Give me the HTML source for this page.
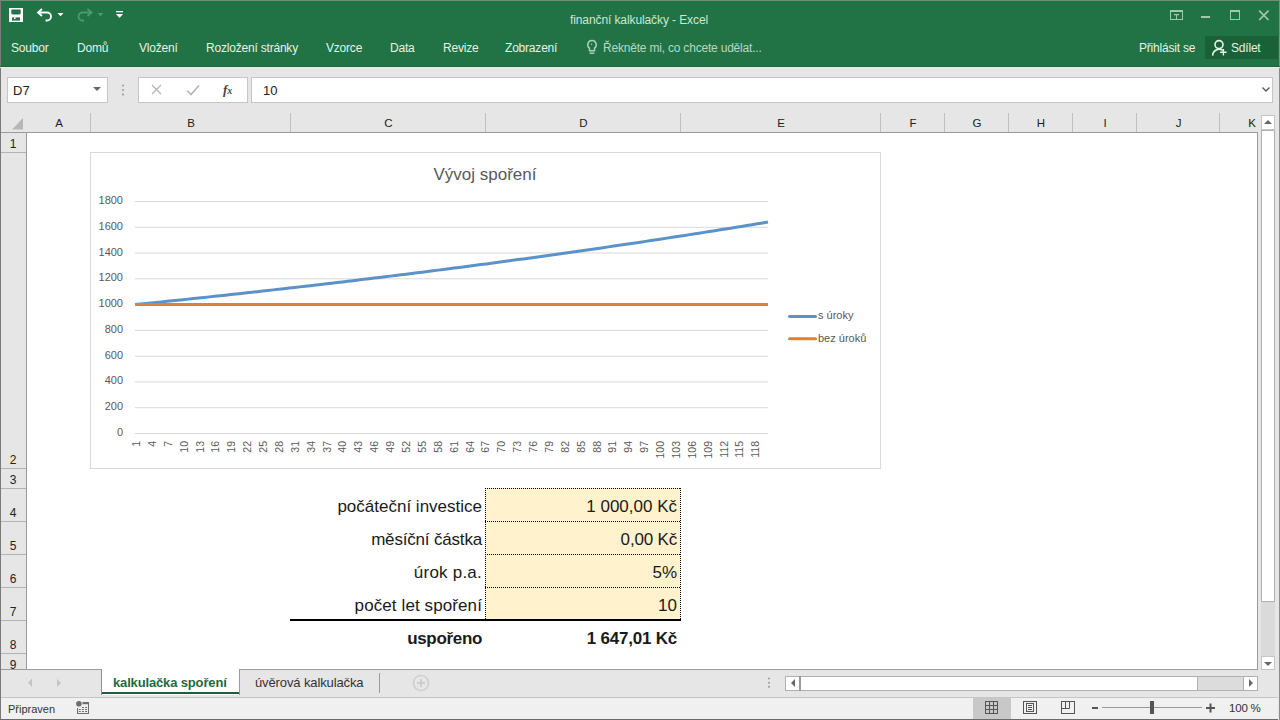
<!DOCTYPE html>
<html><head><meta charset="utf-8">
<style>
*{margin:0;padding:0;box-sizing:border-box}
html,body{width:1280px;height:720px;overflow:hidden;background:#fff;font-family:"Liberation Sans",sans-serif}
.a{position:absolute}
.t{position:absolute;white-space:nowrap;line-height:1}
#title{left:0;top:0;width:1280px;height:67px;background:#217346}
.rt{color:#e4f2e8;font-size:12px;letter-spacing:-0.2px}
.col{position:absolute;top:112px;height:20px;border-right:1px solid #c8c8c8}
.ch{position:absolute;top:117.5px;font-size:11.5px;color:#222;text-align:center;line-height:1;padding-left:2px}
.rh{position:absolute;left:1px;width:25px;border-bottom:1px solid #c8c8c8;background:#e6e6e6}
.rn{position:absolute;left:0;width:26px;text-align:center;font-size:12px;color:#222;line-height:1}
.cell{position:absolute;font-size:17px;color:#1a1a1a;text-align:right;line-height:1}
</style></head><body>
<!-- title bar + ribbon -->
<div id="title" class="a"></div>
<div class="a" style="left:0;top:0;width:1280px;height:1px;background:#6f8f7a"></div>
<div class="a" style="left:0;top:0;width:1px;height:720px;background:#7a7a7a"></div>
<div class="a" style="left:1279px;top:0;width:1px;height:68px;background:#6f9a7e"></div>
<div class="a" style="left:0;top:66px;width:1280px;height:1px;background:#2a6040"></div><div class="a" style="left:0;top:67px;width:1280px;height:1px;background:#dcf2e3"></div>

<!-- QAT icons -->
<svg class="a" style="left:0;top:0" width="140" height="33" viewBox="0 0 140 33">
 <rect x="9" y="8" width="14" height="14" fill="#fff"/>
 <path d="M11.3 9.6h9.4v3.4a1.6 1.6 0 0 1-1.6 1.6h-6.2a1.6 1.6 0 0 1-1.6-1.6z" fill="#217346"/>
 <rect x="12" y="17.4" width="8" height="3.2" fill="#217346"/>
 <rect x="14" y="17.4" width="1.6" height="1.6" fill="#fff"/>
 <path d="M38.5 12.5h8.5a4 4 0 0 1 0 8h-1.5" fill="none" stroke="#fff" stroke-width="1.8"/>
 <path d="M42 9l-4 3.5 4 3.5" fill="none" stroke="#fff" stroke-width="1.8"/>
 <path d="M57.5 13h6l-3 3.2z" fill="#fff"/>
 <path d="M91 12.5h-8.5a4 4 0 0 0 0 8h1.5" fill="none" stroke="#4f9a6c" stroke-width="1.8"/>
 <path d="M87.5 9l4 3.5-4 3.5" fill="none" stroke="#4f9a6c" stroke-width="1.8"/>
 <path d="M97.5 13h6l-3 3.2z" fill="#4f9a6c"/>
 <rect x="116" y="11" width="7" height="1.3" fill="#fff"/>
 <path d="M116 14h7l-3.5 4z" fill="#fff"/>
</svg>
<div class="t" style="left:570px;top:13.7px;font-size:12px;letter-spacing:-0.1px;color:#cce6d5">finanční kalkulačky - Excel</div>

<!-- window controls -->
<svg class="a" style="left:1160px;top:0" width="120" height="33" viewBox="1160 0 120 33">
 <g fill="none" stroke="#9fc8ad" stroke-width="1">
  <rect x="1170.5" y="10.5" width="12" height="9"/>
  <path d="M1170.5 11.5h12"/>
  <path d="M1176.5 19v-5M1174 14.5h5M1175 15.5l1.5-1.5 1.5 1.5"/>
  <rect x="1230.5" y="10.5" width="9" height="9"/>
  <path d="M1230.5 11.5h9"/>
  <path d="M1259.2 10.7l9.3 9.3M1268.5 10.7l-9.3 9.3" stroke-width="1.7"/>
 </g>
 <rect x="1201" y="16" width="9" height="2" fill="#9fc8ad"/>
</svg>

<!-- ribbon tabs -->
<div class="t rt" style="left:11px;top:42.3px">Soubor</div>
<div class="t rt" style="left:77px;top:42.3px">Domů</div>
<div class="t rt" style="left:139px;top:42.3px">Vložení</div>
<div class="t rt" style="left:206px;top:42.3px">Rozložení stránky</div>
<div class="t rt" style="left:326px;top:42.3px">Vzorce</div>
<div class="t rt" style="left:390px;top:42.3px">Data</div>
<div class="t rt" style="left:443px;top:42.3px">Revize</div>
<div class="t rt" style="left:505px;top:42.3px">Zobrazení</div>
<svg class="a" style="left:584px;top:38px" width="16" height="18" viewBox="0 0 16 18">
 <path d="M8 2.6a4.2 4.2 0 0 0-2.5 7.6v2.6h5v-2.6A4.2 4.2 0 0 0 8 2.6z" fill="none" stroke="#a9d1b7" stroke-width="1.5"/>
 <path d="M5.7 15.2h4.6" stroke="#a9d1b7" stroke-width="1.5"/>
 <circle cx="7.6" cy="6.3" r="0.7" fill="#a9d1b7"/>
</svg>
<div class="t rt" style="left:603px;top:42.3px;color:#b5d8c1">Řekněte mi, co chcete udělat...</div>
<div class="t rt" style="left:1139px;top:42.3px">Přihlásit se</div>
<div class="a" style="left:1205px;top:36px;width:73px;height:23px;background:#1b6137"></div>
<svg class="a" style="left:1210px;top:38px" width="20" height="20" viewBox="0 0 20 20">
 <circle cx="9" cy="6.6" r="4" fill="none" stroke="#e4f6ea" stroke-width="1.6"/>
 <path d="M2.6 17.6a6.6 6.6 0 0 1 10.2-5.2" fill="none" stroke="#e4f6ea" stroke-width="1.6"/>
 <path d="M13.4 11v6.5M10.1 14.3h6.5" stroke="#e4f6ea" stroke-width="1.4"/>
</svg>
<div class="t rt" style="left:1231px;top:42.3px">Sdílet</div>

<!-- formula area -->
<div class="a" style="left:1px;top:68px;width:1277px;height:601px;background:#e6e6e6"></div>
<div class="a" style="left:7px;top:77px;width:101px;height:26px;background:#fff;border:1px solid #c6c6c6"></div>
<div class="t" style="left:13px;top:84px;font-size:13px;color:#222">D7</div>
<svg class="a" style="left:92px;top:86px" width="10" height="6"><path d="M1 1h8l-4 4z" fill="#666"/></svg>
<svg class="a" style="left:121px;top:83px" width="4" height="14"><circle cx="2" cy="2.5" r="1" fill="#9a9a9a"/><circle cx="2" cy="7" r="1" fill="#9a9a9a"/><circle cx="2" cy="11.5" r="1" fill="#9a9a9a"/></svg>
<div class="a" style="left:138px;top:77px;width:110px;height:26px;background:#fff;border:1px solid #c6c6c6"></div>
<svg class="a" style="left:138px;top:77px" width="110" height="26" viewBox="138 77 110 26">
 <path d="M152 85l9 9M161 85l-9 9" stroke="#b4b4b4" stroke-width="1.3"/>
 <path d="M187 90.5l4 4 8-9" fill="none" stroke="#b4b4b4" stroke-width="1.6"/>
</svg>
<div class="t" style="left:223px;top:83px;font-size:13px;font-family:'Liberation Serif';font-style:italic;font-weight:bold;color:#444">f<span style="font-size:10px">x</span></div>
<div class="a" style="left:251px;top:77px;width:1022px;height:26px;background:#fff;border:1px solid #c6c6c6"></div>
<div class="t" style="left:263px;top:84px;font-size:13px;color:#222">10</div>
<svg class="a" style="left:1261px;top:86px" width="10" height="7"><path d="M1.5 1.5l3.5 3.5 3.5-3.5" fill="none" stroke="#555" stroke-width="1.3"/></svg>

<!-- column headers -->
<div class="a" style="left:1px;top:132px;width:1257px;height:1px;background:#9b9b9b"></div>
<svg class="a" style="left:8px;top:117px" width="16" height="14"><path d="M15 1v11.5H4z" fill="#b7b7b7"/></svg>
<div class="a" style="left:90px;top:113px;width:1px;height:19px;background:#c0c0c0"></div>
<div class="ch" style="left:26px;width:64px">A</div>
<div class="a" style="left:290px;top:113px;width:1px;height:19px;background:#c0c0c0"></div>
<div class="ch" style="left:90px;width:200px">B</div>
<div class="a" style="left:485px;top:113px;width:1px;height:19px;background:#c0c0c0"></div>
<div class="ch" style="left:290px;width:195px">C</div>
<div class="a" style="left:680px;top:113px;width:1px;height:19px;background:#c0c0c0"></div>
<div class="ch" style="left:485px;width:195px">D</div>
<div class="a" style="left:880px;top:113px;width:1px;height:19px;background:#c0c0c0"></div>
<div class="ch" style="left:680px;width:200px">E</div>
<div class="a" style="left:944px;top:113px;width:1px;height:19px;background:#c0c0c0"></div>
<div class="ch" style="left:880px;width:64px">F</div>
<div class="a" style="left:1008px;top:113px;width:1px;height:19px;background:#c0c0c0"></div>
<div class="ch" style="left:944px;width:64px">G</div>
<div class="a" style="left:1072px;top:113px;width:1px;height:19px;background:#c0c0c0"></div>
<div class="ch" style="left:1008px;width:64px">H</div>
<div class="a" style="left:1136px;top:113px;width:1px;height:19px;background:#c0c0c0"></div>
<div class="ch" style="left:1072px;width:64px">I</div>
<div class="a" style="left:1219px;top:113px;width:1px;height:19px;background:#c0c0c0"></div>
<div class="ch" style="left:1136px;width:83px">J</div>
<div class="a" style="left:1258px;top:113px;width:1px;height:19px;background:#c0c0c0"></div>
<div class="ch" style="left:1219px;width:39px;text-align:right;padding-right:2px">K</div>
<!-- grid white -->
<div class="a" style="left:27px;top:133px;width:1231px;height:536px;background:#fff"></div>
<div class="a" style="left:26px;top:132px;width:1px;height:537px;background:#9b9b9b"></div>
<div class="a" style="left:1px;top:152px;width:25px;height:1px;background:#b4b4b4"></div>
<div class="rn" style="top:137.5px">1</div>
<div class="a" style="left:1px;top:468px;width:25px;height:1px;background:#b4b4b4"></div>
<div class="rn" style="top:453.5px">2</div>
<div class="a" style="left:1px;top:488px;width:25px;height:1px;background:#b4b4b4"></div>
<div class="rn" style="top:473.5px">3</div>
<div class="a" style="left:1px;top:521px;width:25px;height:1px;background:#b4b4b4"></div>
<div class="rn" style="top:506.5px">4</div>
<div class="a" style="left:1px;top:554px;width:25px;height:1px;background:#b4b4b4"></div>
<div class="rn" style="top:539.5px">5</div>
<div class="a" style="left:1px;top:587px;width:25px;height:1px;background:#b4b4b4"></div>
<div class="rn" style="top:572.5px">6</div>
<div class="a" style="left:1px;top:620px;width:25px;height:1px;background:#b4b4b4"></div>
<div class="rn" style="top:605.5px">7</div>
<div class="a" style="left:1px;top:653px;width:25px;height:1px;background:#b4b4b4"></div>
<div class="rn" style="top:638.5px">8</div>
<div class="a" style="left:1px;top:673px;width:25px;height:1px;background:#b4b4b4"></div>
<div class="rn" style="top:658.5px">9</div>

<!-- chart -->
<div class="a" style="left:90px;top:152px;width:791px;height:317px;border:1px solid #d9d9d9;background:#fff"></div>
<svg class="a" style="left:0;top:0" width="1280" height="720" viewBox="0 0 1280 720">
<g fill="#595959" font-family="Liberation Sans" font-size="11">
<line stroke="#d9d9d9" x1="135" x2="768" y1="433.5" y2="433.5"/>
<text x="123" y="437.5" dy="-1.5" text-anchor="end">0</text>
<line stroke="#d9d9d9" x1="135" x2="768" y1="407.7" y2="407.7"/>
<text x="123" y="411.7" dy="-1.5" text-anchor="end">200</text>
<line stroke="#d9d9d9" x1="135" x2="768" y1="381.9" y2="381.9"/>
<text x="123" y="385.9" dy="-1.5" text-anchor="end">400</text>
<line stroke="#d9d9d9" x1="135" x2="768" y1="356.2" y2="356.2"/>
<text x="123" y="360.2" dy="-1.5" text-anchor="end">600</text>
<line stroke="#d9d9d9" x1="135" x2="768" y1="330.4" y2="330.4"/>
<text x="123" y="334.4" dy="-1.5" text-anchor="end">800</text>
<line stroke="#d9d9d9" x1="135" x2="768" y1="304.6" y2="304.6"/>
<text x="123" y="308.6" dy="-1.5" text-anchor="end">1000</text>
<line stroke="#d9d9d9" x1="135" x2="768" y1="278.8" y2="278.8"/>
<text x="123" y="282.8" dy="-1.5" text-anchor="end">1200</text>
<line stroke="#d9d9d9" x1="135" x2="768" y1="253.0" y2="253.0"/>
<text x="123" y="257.0" dy="-1.5" text-anchor="end">1400</text>
<line stroke="#d9d9d9" x1="135" x2="768" y1="227.3" y2="227.3"/>
<text x="123" y="231.3" dy="-1.5" text-anchor="end">1600</text>
<line stroke="#d9d9d9" x1="135" x2="768" y1="201.5" y2="201.5"/>
<text x="123" y="205.5" dy="-1.5" text-anchor="end">1800</text>
</g>
<text x="485" y="180" text-anchor="middle" font-family="Liberation Sans" font-size="17" fill="#595959">Vývoj spoření</text>
<g fill="#595959" font-family="Liberation Sans" font-size="10.5">
<text transform="translate(140.0,441) rotate(-90)" text-anchor="end">1</text>
<text transform="translate(155.9,441) rotate(-90)" text-anchor="end">4</text>
<text transform="translate(171.8,441) rotate(-90)" text-anchor="end">7</text>
<text transform="translate(187.6,441) rotate(-90)" text-anchor="end">10</text>
<text transform="translate(203.5,441) rotate(-90)" text-anchor="end">13</text>
<text transform="translate(219.4,441) rotate(-90)" text-anchor="end">16</text>
<text transform="translate(235.3,441) rotate(-90)" text-anchor="end">19</text>
<text transform="translate(251.2,441) rotate(-90)" text-anchor="end">22</text>
<text transform="translate(267.0,441) rotate(-90)" text-anchor="end">25</text>
<text transform="translate(282.9,441) rotate(-90)" text-anchor="end">28</text>
<text transform="translate(298.8,441) rotate(-90)" text-anchor="end">31</text>
<text transform="translate(314.7,441) rotate(-90)" text-anchor="end">34</text>
<text transform="translate(330.5,441) rotate(-90)" text-anchor="end">37</text>
<text transform="translate(346.4,441) rotate(-90)" text-anchor="end">40</text>
<text transform="translate(362.3,441) rotate(-90)" text-anchor="end">43</text>
<text transform="translate(378.2,441) rotate(-90)" text-anchor="end">46</text>
<text transform="translate(394.1,441) rotate(-90)" text-anchor="end">49</text>
<text transform="translate(409.9,441) rotate(-90)" text-anchor="end">52</text>
<text transform="translate(425.8,441) rotate(-90)" text-anchor="end">55</text>
<text transform="translate(441.7,441) rotate(-90)" text-anchor="end">58</text>
<text transform="translate(457.6,441) rotate(-90)" text-anchor="end">61</text>
<text transform="translate(473.5,441) rotate(-90)" text-anchor="end">64</text>
<text transform="translate(489.3,441) rotate(-90)" text-anchor="end">67</text>
<text transform="translate(505.2,441) rotate(-90)" text-anchor="end">70</text>
<text transform="translate(521.1,441) rotate(-90)" text-anchor="end">73</text>
<text transform="translate(537.0,441) rotate(-90)" text-anchor="end">76</text>
<text transform="translate(552.9,441) rotate(-90)" text-anchor="end">79</text>
<text transform="translate(568.7,441) rotate(-90)" text-anchor="end">82</text>
<text transform="translate(584.6,441) rotate(-90)" text-anchor="end">85</text>
<text transform="translate(600.5,441) rotate(-90)" text-anchor="end">88</text>
<text transform="translate(616.4,441) rotate(-90)" text-anchor="end">91</text>
<text transform="translate(632.2,441) rotate(-90)" text-anchor="end">94</text>
<text transform="translate(648.1,441) rotate(-90)" text-anchor="end">97</text>
<text transform="translate(664.0,441) rotate(-90)" text-anchor="end">100</text>
<text transform="translate(679.9,441) rotate(-90)" text-anchor="end">103</text>
<text transform="translate(695.8,441) rotate(-90)" text-anchor="end">106</text>
<text transform="translate(711.6,441) rotate(-90)" text-anchor="end">109</text>
<text transform="translate(727.5,441) rotate(-90)" text-anchor="end">112</text>
<text transform="translate(743.4,441) rotate(-90)" text-anchor="end">115</text>
<text transform="translate(759.3,441) rotate(-90)" text-anchor="end">118</text>
</g>
<polyline points="135.00,304.60 140.32,304.06 145.64,303.52 150.96,302.98 156.28,302.44 161.60,301.89 166.92,301.34 172.24,300.79 177.55,300.24 182.87,299.68 188.19,299.13 193.51,298.57 198.83,298.01 204.15,297.44 209.47,296.87 214.79,296.30 220.11,295.73 225.43,295.16 230.75,294.58 236.07,294.00 241.39,293.42 246.71,292.84 252.03,292.25 257.34,291.66 262.66,291.07 267.98,290.48 273.30,289.88 278.62,289.29 283.94,288.68 289.26,288.08 294.58,287.48 299.90,286.87 305.22,286.26 310.54,285.64 315.86,285.03 321.18,284.41 326.50,283.79 331.82,283.16 337.13,282.54 342.45,281.91 347.77,281.28 353.09,280.64 358.41,280.00 363.73,279.36 369.05,278.72 374.37,278.08 379.69,277.43 385.01,276.78 390.33,276.13 395.65,275.47 400.97,274.81 406.29,274.15 411.61,273.49 416.92,272.82 422.24,272.15 427.56,271.48 432.88,270.80 438.20,270.13 443.52,269.45 448.84,268.76 454.16,268.08 459.48,267.39 464.80,266.69 470.12,266.00 475.44,265.30 480.76,264.60 486.08,263.90 491.39,263.19 496.71,262.48 502.03,261.77 507.35,261.05 512.67,260.33 517.99,259.61 523.31,258.89 528.63,258.16 533.95,257.43 539.27,256.70 544.59,255.96 549.91,255.22 555.23,254.48 560.55,253.73 565.87,252.98 571.18,252.23 576.50,251.47 581.82,250.72 587.14,249.95 592.46,249.19 597.78,248.42 603.10,247.65 608.42,246.88 613.74,246.10 619.06,245.32 624.38,244.53 629.70,243.75 635.02,242.95 640.34,242.16 645.66,241.36 650.97,240.56 656.29,239.76 661.61,238.95 666.93,238.14 672.25,237.33 677.57,236.51 682.89,235.69 688.21,234.86 693.53,234.04 698.85,233.21 704.17,232.37 709.49,231.53 714.81,230.69 720.13,229.85 725.45,229.00 730.76,228.15 736.08,227.29 741.40,226.43 746.72,225.57 752.04,224.70 757.36,223.83 762.68,222.96 768.00,222.08" fill="none" stroke="#5b93c9" stroke-width="3" stroke-linejoin="round"/>
<polyline points="135,304.6 768,304.6" fill="none" stroke="#e27e3a" stroke-width="3"/>
<line x1="789.5" x2="815.5" y1="316.5" y2="316.5" stroke="#5b93c9" stroke-width="3" stroke-linecap="round"/>
<line x1="789.5" x2="815.5" y1="338.8" y2="338.8" stroke="#e27e3a" stroke-width="3" stroke-linecap="round"/>
<text x="818" y="319.3" font-family="Liberation Sans" font-size="11" fill="#595959">s úroky</text>
<text x="818" y="342" font-family="Liberation Sans" font-size="11" fill="#595959">bez úroků</text>
</svg>

<!-- table -->
<div class="a" style="left:485px;top:488px;width:196px;height:132px;background:#fff2cc"></div>
<svg class="a" style="left:0;top:0" width="1280" height="720" viewBox="0 0 1280 720">
 <g stroke="#000" stroke-width="1" stroke-dasharray="1 1" fill="none">
  <path d="M485.5 488v132M680.5 488v132M485 488.5h196M485 521.5h196M485 554.5h196M485 587.5h196"/>
 </g>
 <rect x="290" y="619" width="391" height="2" fill="#000"/>
</svg>
<div class="cell" style="right:798px;top:498px">počáteční investice</div>
<div class="cell" style="right:798px;top:531px;letter-spacing:-0.18px">měsíční částka</div>
<div class="cell" style="right:798px;top:564px;letter-spacing:0.22px">úrok p.a.</div>
<div class="cell" style="right:798px;top:597px;letter-spacing:0.1px">počet let spoření</div>
<div class="cell" style="right:798px;top:630px;font-weight:bold;letter-spacing:-0.33px">uspořeno</div>
<div class="cell" style="right:603px;top:498px">1 000,00 Kč</div>
<div class="cell" style="right:603px;top:531px;letter-spacing:-0.18px">0,00 Kč</div>
<div class="cell" style="right:603px;top:564px">5%</div>
<div class="cell" style="right:603px;top:597px">10</div>
<div class="cell" style="right:603px;top:630px;font-weight:bold;letter-spacing:-0.21px">1 647,01 Kč</div>

<!-- vertical scrollbar -->
<div class="a" style="left:1258px;top:112px;width:20px;height:558px;background:#e6e6e6"></div>
<div class="a" style="left:1257px;top:132px;width:1px;height:537px;background:#9b9b9b"></div>
<div class="a" style="left:1261px;top:115px;width:14px;height:15px;background:#fff;border:1px solid #c6c6c6"></div>
<svg class="a" style="left:1263px;top:119px" width="10" height="6"><path d="M1 5h8L5 1z" fill="#666"/></svg>
<div class="a" style="left:1261px;top:600px;width:14px;height:56px;background:#dadada"></div>
<div class="a" style="left:1261px;top:130px;width:14px;height:472px;background:#fff;border:1px solid #b0b0b0"></div>
<div class="a" style="left:1261px;top:656px;width:14px;height:14px;background:#fff;border:1px solid #c6c6c6"></div>
<svg class="a" style="left:1263px;top:661px" width="10" height="6"><path d="M1 1h8L5 5z" fill="#666"/></svg>

<!-- sheet tabs bar -->
<div class="a" style="left:1px;top:669px;width:1257px;height:1px;background:#9b9b9b"></div>
<div class="a" style="left:1px;top:670px;width:1277px;height:27px;background:#e6e6e6"></div>
<svg class="a" style="left:20px;top:676px" width="50" height="14"><path d="M12 2.5v8.5l-4-4.25z" fill="#c4c4c4"/><path d="M37 3v8l4-4z" fill="#c4c4c4"/></svg>
<div class="a" style="left:101px;top:669px;width:139px;height:26px;background:#fff;border-left:1px solid #8f8f8f;border-right:1px solid #9a9a9a"></div>
<div class="a" style="left:102px;top:692px;width:137px;height:2px;background:#1e5e3a"></div>
<div class="t" style="left:113px;top:676px;font-size:13px;font-weight:bold;letter-spacing:-0.15px;color:#1f6a40">kalkulačka spoření</div>
<div class="t" style="left:255px;top:676px;font-size:13px;letter-spacing:-0.12px;color:#333">úvěrová kalkulačka</div>
<div class="a" style="left:379px;top:673px;width:1px;height:20px;background:#9b9b9b"></div>
<svg class="a" style="left:411px;top:673px" width="20" height="20"><circle cx="10" cy="10" r="7.5" fill="none" stroke="#c8c8c8" stroke-width="1.2"/><path d="M10 6v8M6 10h8" stroke="#c8c8c8" stroke-width="1.5"/></svg>
<svg class="a" style="left:766px;top:676px" width="6" height="14"><circle cx="3" cy="2.6" r="1" fill="#9a9a9a"/><circle cx="3" cy="6.8" r="1" fill="#9a9a9a"/><circle cx="3" cy="10.8" r="1" fill="#9a9a9a"/></svg>
<div class="a" style="left:785px;top:676px;width:473px;height:15px;background:#dcdcdc;border:1px solid #b0b0b0"></div>
<div class="a" style="left:785px;top:676px;width:413px;height:15px;background:#fff;border:1px solid #b0b0b0"></div>
<div class="a" style="left:799px;top:676px;width:2px;height:15px;background:#9b9b9b"></div>
<svg class="a" style="left:788px;top:678px" width="10" height="10"><path d="M7 1v8L3 5z" fill="#666"/></svg>
<div class="a" style="left:1243px;top:676px;width:15px;height:15px;background:#fff;border:1px solid #b0b0b0"></div>
<svg class="a" style="left:1246px;top:678px" width="10" height="10"><path d="M3 1v8l4-4z" fill="#666"/></svg>

<!-- status bar -->
<div class="a" style="left:1px;top:697px;width:1277px;height:1px;background:#c6c6c6"></div>
<div class="a" style="left:1px;top:698px;width:1277px;height:21px;background:#f0f0f0"></div>
<div class="a" style="left:0;top:719px;width:1280px;height:1px;background:#6a6a6a"></div>
<div class="t" style="left:8px;top:704px;font-size:11px;color:#333">Připraven</div>
<svg class="a" style="left:70px;top:698px" width="26" height="20"><g fill="#6e6e6e"><circle cx="8.9" cy="5.8" r="2.8"/><rect x="12.5" y="4" width="6.5" height="2.2"/><rect x="18" y="4" width="1" height="12"/><rect x="7" y="15" width="12" height="1"/><rect x="7" y="10" width="1" height="6"/><rect x="11.9" y="9" width="2" height="1"/><rect x="15.1" y="9" width="2" height="1"/><rect x="8.7" y="11" width="2" height="1"/><rect x="11.9" y="11" width="2" height="1"/><rect x="15.1" y="11" width="2" height="1"/><rect x="8.7" y="13" width="2" height="1"/><rect x="11.9" y="13" width="2" height="1"/><rect x="15.1" y="13" width="2" height="1"/></g></svg>
<div class="a" style="left:973px;top:698px;width:38px;height:21px;background:#c8c8c8"></div>
<svg class="a" style="left:0;top:690px" width="1280" height="30" viewBox="0 690 1280 30">
 <g fill="none" stroke="#555" stroke-width="1">
  <rect x="985.5" y="701.5" width="12" height="12"/>
  <path d="M989.5 701.5v12M993.5 701.5v12M985.5 705.5h12M985.5 709.5h12"/>
  <rect x="1023.5" y="701.5" width="13" height="12"/>
  <rect x="1026.5" y="703.5" width="7" height="8"/>
  <path d="M1028 705.5h4M1028 707.5h4M1028 709.5h4"/>
  <rect x="1061.5" y="701.5" width="13" height="12"/>
  <path d="M1065.5 701.5v7M1069.5 701.5v7M1061.5 708.5h8"/>
  <path d="M1102 707.5h100" stroke="#999"/>
 </g>
 <rect x="1092" y="707" width="6" height="2" fill="#555"/>
 <rect x="1150" y="701" width="4" height="13" fill="#555"/>
 <rect x="1206" y="707" width="9" height="2" fill="#555"/>
 <rect x="1209.5" y="703.5" width="2" height="9" fill="#555"/>
</svg>
<div class="t" style="left:1229px;top:703px;font-size:11.5px;letter-spacing:-0.2px;color:#333">100 %</div>
<div class="a" style="left:1278px;top:68px;width:2px;height:652px;background:#e6e6e6;border-right:1px solid #8c8c8c"></div>
</body></html>
